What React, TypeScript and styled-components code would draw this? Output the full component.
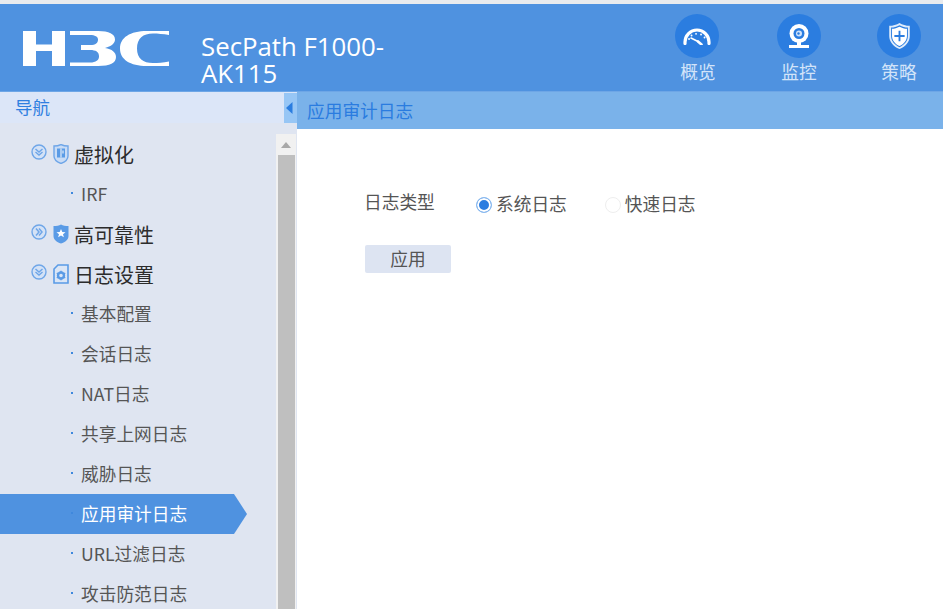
import React from "react";
import styled, { createGlobalStyle } from "styled-components";

const Global = createGlobalStyle`
  html, body { margin: 0; padding: 0; height: 100%; background: #fff; overflow: hidden; }
  #root { height: 100%; }
  * { box-sizing: border-box; }
`;

const FONT = `"Noto Sans CJK SC", "Open Sans", sans-serif`;

const Page = styled.div`
  width: 943px;
  height: 609px;
  display: flex;
  flex-direction: column;
  overflow: hidden;
  font-family: ${FONT};
  border-top: 4px solid #e9ebee;
`;

const Header = styled.header`
  height: 88px;
  flex: none;
  background: #4f92e0;
  display: flex;
  align-items: flex-start;
  border-bottom: 1px solid #6ea6e6;
`;

const LogoWrap = styled.div`
  width: 201px;
  flex: none;
  padding: 26px 0 0 23px;
  display: flex;
`;

const Product = styled.div`
  width: 230px;
  flex: none;
  margin-top: 29px;
  color: #fff;
  font-family: "Open Sans", sans-serif;
  font-size: 25.8px;
  line-height: 27px;
`;

const Menu = styled.nav`
  margin-left: auto;
  display: flex;
  gap: 56px;
  padding: 10px 22px 0 0;
`;

const MenuItem = styled.div<{ $wide?: boolean }>`
  width: ${(p) => (p.$wide ? "46px" : "44px")};
  display: flex;
  flex-direction: column;
  align-items: center;
`;

const MenuCircle = styled.div`
  width: 44px;
  height: 44px;
  border-radius: 50%;
  background: #2b7de0;
  display: flex;
  align-items: center;
  justify-content: center;
  align-self: flex-start;
`;

const MenuLabel = styled.div`
  color: #d3e4f9;
  font-size: 17.7px;
  line-height: 24px;
  margin-top: 1px;
  white-space: nowrap;
`;

const Body = styled.div`
  flex: 1;
  min-height: 0;
  display: flex;
`;

const Sidebar = styled.aside`
  width: 297px;
  flex: none;
  display: flex;
  flex-direction: column;
  background: #dfe5f1;
  position: relative;
`;

const SideTitle = styled.div`
  height: 31px;
  flex: none;
  background: #dce6f8;
  color: #2f7fe0;
  font-size: 17.5px;
  line-height: 29px;
  padding-left: 15px;
`;

const Toggle = styled.button`
  position: absolute;
  top: 1px;
  right: 0;
  width: 13px;
  height: 30px;
  padding: 0 0 0 2px;
  border: 0;
  background: #97c6f5;
  display: flex;
  align-items: center;
  justify-content: flex-start;
`;

const SideBody = styled.div`
  flex: 1;
  min-height: 0;
  display: flex;
  padding-top: 11px;
`;

const NavList = styled.ul`
  list-style: none;
  margin: 0;
  padding: 0;
  flex: 1;
  min-width: 0;
`;

const GroupRow = styled.li`
  height: 40px;
  display: flex;
  align-items: center;
  padding-left: 31px;
  color: #2c2c2c;
  font-size: 20px;
`;

const GroupIcons = styled.span`
  display: flex;
  align-items: flex-start;
  gap: 6px;
  width: 43px;
  flex: none;
  margin-top: -1px;
`;

const ChildRow = styled.li<{ $active?: boolean }>`
  height: 40px;
  width: ${(p) => (p.$active ? "247px" : "auto")};
  display: flex;
  align-items: center;
  padding: 0 0 2px 71px;
  font-size: 17.7px;
  color: ${(p) => (p.$active ? "#fff" : "#555")};
  background: ${(p) => (p.$active ? "#4f92e0" : "transparent")};
  clip-path: ${(p) =>
    p.$active ? "polygon(0 0, 234px 0, 100% 50%, 234px 100%, 0 100%)" : "none"};
`;

const Dot = styled.span`
  width: 2px;
  height: 2px;
  background: #3f88dd;
  margin-right: 8px;
  flex: none;
`;

const Track = styled.div`
  width: 20px;
  flex: none;
  margin-right: 1px;
  background: #f1f1f1;
  display: flex;
  flex-direction: column;
  align-items: center;
`;

const TrackArrow = styled.div`
  height: 21px;
  flex: none;
  display: flex;
  align-items: center;
  justify-content: center;
`;

const Thumb = styled.div`
  width: 17px;
  flex: 1;
  background: #bfbfbf;
`;

const Content = styled.main`
  flex: 1;
  min-width: 0;
  display: flex;
  flex-direction: column;
`;

const ContentTitle = styled.div`
  height: 37px;
  flex: none;
  background: #7ab2ea;
  color: #2a7ce0;
  font-size: 17.7px;
  line-height: 37px;
  padding-left: 10px;
`;

const Form = styled.div`
  padding: 58px 0 0 68px;
  color: #555;
  font-size: 17.7px;
`;

const FieldRow = styled.div`
  display: flex;
  align-items: flex-start;
  height: 36px;
`;

const FieldLabel = styled.div`
  width: 112px;
  margin-left: -1px;
  line-height: 28px;
  flex: none;
`;

const RadioOption = styled.label`
  display: flex;
  align-items: center;
  gap: 4px;
  height: 36px;
  margin-right: 38px;
`;

const RadioText = styled.span`
  line-height: 32px;
  margin-bottom: 4px;
`;

const RadioDot = styled.span<{ $on?: boolean }>`
  width: 16px;
  height: 16px;
  border-radius: 50%;
  flex: none;
  background: ${(p) => (p.$on ? "#2b7de0" : "#fff")};
  border: ${(p) => (p.$on ? "1px solid #8dbcf0" : "1px solid #eeeeee")};
  box-shadow: ${(p) => (p.$on ? "inset 0 0 0 2px #fff" : "none")};
`;

const ApplyButton = styled.button`
  display: block;
  width: 86px;
  height: 28px;
  margin-top: 22px;
  border: 0;
  border-radius: 2px;
  background: #dde4f2;
  color: #555;
  font-family: ${FONT};
  font-size: 17.7px;
  line-height: 26px;
  padding: 0 0 2px;
`;

const H3CLogo = () => (
  <svg width="146" height="37" viewBox="0 0 146 37" fill="#fff">
    <path d="M0 1h13v13.500h16V1h13v35H29V21H13v15H0z" />
    <path d="M47 1h28c11 0 17 3 17 8.500 0 4-4 7-10 8.500 7 1 11 4.500 11 9 0 6-6 9-18 9H47v-3.500h20c6 0 9-2.500 9-6 0-4.500-3-6.500-9-6.500H58v-5h9c6 0 8-2 8-5.500 0-3-3-4.500-8-4.500H47z" />
    <path d="M146 1v4c-6-1-11-1.500-16-1.500-10 0-16 5-16 15s6 14.500 16 14.500c5 0 10-.5 16-1.500v4.500h-22c-17 0-27-6.500-27-17.500S107 1 124 1z" />
  </svg>
);

const GaugeIcon = () => (
  <svg width="30" height="18" viewBox="0 0 30 18" fill="none" stroke="#fff" strokeLinecap="round">
    <path d="M3 16.500V15a12 12 0 0 1 24 0v1.500" strokeWidth="3.200" />
    <path d="M7 12h.1M9.500 8.500h.1M14 6.800h.1M19 7.500h.1M22.500 10.500h.1" strokeWidth="1.800" />
    <path d="M9 11l7 3.500" strokeWidth="1.600" />
    <path d="M16 14.500l3.500 3" strokeWidth="2.600" />
  </svg>
);

const CamIcon = () => (
  <svg width="20" height="24" viewBox="0 0 20 24">
    <circle cx="10" cy="9.500" r="9.500" fill="#fff" />
    <circle cx="10" cy="9.500" r="5.500" fill="#2b7de0" />
    <circle cx="10" cy="9.500" r="3" fill="#cfe2fa" />
    <circle cx="9.500" cy="9.500" r="1.200" fill="#2b7de0" />
    <rect x="8" y="18" width="4" height="3" fill="#fff" />
    <rect x="0" y="21" width="20" height="3" fill="#fff" />
  </svg>
);

const ShieldPlusIcon = () => (
  <svg width="23" height="28" viewBox="0 0 24 30" fill="none">
    <path d="M12 1c3 2 7 3 11 3v11c0 6-4 11-11 14C5 26 1 21 1 15V4c4 0 8-1 11-3z" fill="#fff" opacity=".85" />
    <path d="M12 3.500c3 1.500 6 2.500 9 2.500v9c0 5-3.500 9.500-9 12-5.500-2.500-9-7-9-12V6c3 0 6-1 9-2.500z" fill="#2b7de0" />
    <path d="M12 5c2.700 1.300 5.400 2.200 8 2.300V15c0 4.500-3 8.500-8 10.800C7 23.500 4 19.500 4 15V7.300C6.600 7.200 9.300 6.300 12 5z" fill="#fff" />
    <path d="M12 9.500v11M6.500 15h11" stroke="#2b7de0" strokeWidth="2" />
  </svg>
);

const Expander = ({ right }: { right?: boolean }) => (
  <svg width="16" height="16" viewBox="0 0 16 16" fill="none">
    <circle cx="8" cy="8" r="7" fill="#d4e2f6" stroke="#6fa6e8" strokeWidth="1.400" />
    <path
      d={right ? "M5 4.500L8 8l-3 3.500M8 4.500L11 8l-3 3.500" : "M4.500 5L8 8l3.500-3M4.500 8L8 11l3.500-3"}
      stroke="#6fa6e8"
      strokeWidth="1.500"
    />
  </svg>
);

const ShieldDoc = () => (
  <svg width="16" height="20" viewBox="0 0 16 20">
    <path d="M1 2c3 0 5-.5 7-1.500C10 1.500 12 2 15 2v10c0 3-3 6-7 7.500C4 18 1 15 1 12z" fill="#c9dcf6" stroke="#6fa6e8" strokeWidth="1.400" />
    <rect x="4" y="4.500" width="8" height="9" fill="#5a9be6" />
    <path d="M8 4.500v9M10 6.500v3" stroke="#e4edf9" strokeWidth="1.200" />
  </svg>
);

const ShieldStar = () => (
  <svg width="16" height="20" viewBox="0 0 16 20">
    <path d="M.5 2c3 0 5.500-.5 7.500-1.500C10 1.500 12.500 2 15.500 2v10c0 3.500-3 6-7.500 7.500C3.500 18 .5 15.500.5 12z" fill="#5a9be6" />
    <path d="M8 5l1.300 3 3.200.2-2.500 2 .9 3.100L8 11.600l-2.900 1.700.9-3.100-2.500-2 3.200-.2z" fill="#fff" />
  </svg>
);

const DocGear = () => (
  <svg width="16" height="20" viewBox="0 0 16 20" fill="none">
    <path d="M5 1h10v18H1V5z" fill="#dbe6f6" stroke="#5a9be6" strokeWidth="1.600" />
    <circle cx="8" cy="11.500" r="3" stroke="#5a9be6" strokeWidth="2.400" />
    <path d="M8 6.800v1.400M8 14.800v1.400M3.800 9l1.200.8M11 13.200l1.200.8M3.800 14l1.200-.8M11 9.800l1.200-.8" stroke="#5a9be6" strokeWidth="1.400" />
  </svg>
);

const children = ["基本配置", "会话日志", "NAT日志", "共享上网日志", "威胁日志", "应用审计日志", "URL过滤日志", "攻击防范日志"];

export default function App() {
  return (
    <Page>
      <Global />
      <Header>
        <LogoWrap>
          <H3CLogo />
        </LogoWrap>
        <Product>SecPath F1000-AK115</Product>
        <Menu>
          <MenuItem $wide>
            <MenuCircle><GaugeIcon /></MenuCircle>
            <MenuLabel>概览</MenuLabel>
          </MenuItem>
          <MenuItem>
            <MenuCircle><CamIcon /></MenuCircle>
            <MenuLabel>监控</MenuLabel>
          </MenuItem>
          <MenuItem>
            <MenuCircle><ShieldPlusIcon /></MenuCircle>
            <MenuLabel>策略</MenuLabel>
          </MenuItem>
        </Menu>
      </Header>
      <Body>
        <Sidebar>
          <SideTitle>导航</SideTitle>
          <Toggle aria-label="收起">
            <svg width="7" height="12" viewBox="0 0 7 12">
              <path d="M6.500 0v12L0 6z" fill="#2b7de0" />
            </svg>
          </Toggle>
          <SideBody>
            <NavList>
              <GroupRow>
                <GroupIcons><Expander /><ShieldDoc /></GroupIcons>
                虚拟化
              </GroupRow>
              <ChildRow><Dot />IRF</ChildRow>
              <GroupRow>
                <GroupIcons><Expander right /><ShieldStar /></GroupIcons>
                高可靠性
              </GroupRow>
              <GroupRow>
                <GroupIcons><Expander /><DocGear /></GroupIcons>
                日志设置
              </GroupRow>
              {children.map((c) => (
                <ChildRow key={c} $active={c === "应用审计日志"}>
                  <Dot />
                  {c}
                </ChildRow>
              ))}
            </NavList>
            <Track>
              <TrackArrow>
                <svg width="10" height="6" viewBox="0 0 10 6">
                  <path d="M5 0l5 6H0z" fill="#a8a8a8" />
                </svg>
              </TrackArrow>
              <Thumb />
            </Track>
          </SideBody>
        </Sidebar>
        <Content>
          <ContentTitle>应用审计日志</ContentTitle>
          <Form>
            <FieldRow>
              <FieldLabel>日志类型</FieldLabel>
              <RadioOption><RadioDot $on /><RadioText>系统日志</RadioText></RadioOption>
              <RadioOption><RadioDot /><RadioText>快速日志</RadioText></RadioOption>
            </FieldRow>
            <ApplyButton>应用</ApplyButton>
          </Form>
        </Content>
      </Body>
    </Page>
  );
}
